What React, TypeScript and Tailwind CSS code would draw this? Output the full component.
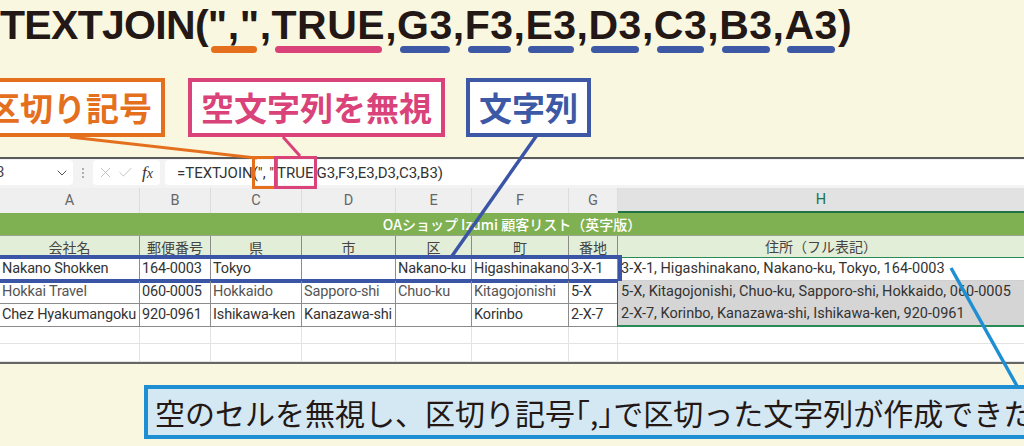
import { ChevronDown, X, Check } from "lucide-react";

const cols = "grid grid-cols-[140px_71px_91px_94px_76px_97px_49px_1fr]";

const letters = ["A", "B", "C", "D", "E", "F", "G", "H"];
const heads = ["会社名", "郵便番号", "県", "市", "区", "町", "番地", "住所（フル表記）"];

const rows = [
  {
    cells: ["Nakano Shokken", "164-0003", "Tokyo", "", "Nakano-ku", "Higashinakano", "3-X-1"],
    full: "3-X-1, Higashinakano, Nakano-ku, Tokyo, 164-0003",
    h: "h-[23px]",
  },
  {
    cells: ["Hokkai Travel", "060-0005", "Hokkaido", "Sapporo-shi", "Chuo-ku", "Kitagojonishi", "5-X"],
    full: "5-X, Kitagojonishi, Chuo-ku, Sapporo-shi, Hokkaido, 060-0005",
    h: "h-[22px]",
  },
  {
    cells: ["Chez Hyakumangoku", "920-0961", "Ishikawa-ken", "Kanazawa-shi", "", "Korinbo", "2-X-7"],
    full: "2-X-7, Korinbo, Kanazawa-shi, Ishikawa-ken, 920-0961",
    h: "h-[22px]",
  },
];

// formula tokens in the big heading, with the colour of the pill under them
const tokens: { t: string; pill?: string; track: string }[] = [
  { t: "TEXTJOIN(", track: "tracking-[-0.7px]" },
  { t: '","', pill: "bg-[#e4701e]", track: "tracking-[0.5px]" },
  { t: ",", track: "tracking-[0.5px]" },
  { t: "TRUE", pill: "bg-[#d9437a]", track: "tracking-[0.5px]" },
  { t: ",", track: "tracking-[0.5px]" },
  { t: "G3", pill: "bg-[#3d58a5]", track: "tracking-[0.5px]" },
  { t: ",", track: "tracking-[0.5px]" },
  { t: "F3", pill: "bg-[#3d58a5]", track: "tracking-[0.5px]" },
  { t: ",", track: "tracking-[0.5px]" },
  { t: "E3", pill: "bg-[#3d58a5]", track: "tracking-[0.5px]" },
  { t: ",", track: "tracking-[0.5px]" },
  { t: "D3", pill: "bg-[#3d58a5]", track: "tracking-[0.5px]" },
  { t: ",", track: "tracking-[0.5px]" },
  { t: "C3", pill: "bg-[#3d58a5]", track: "tracking-[0.5px]" },
  { t: ",", track: "tracking-[0.5px]" },
  { t: "B3", pill: "bg-[#3d58a5]", track: "tracking-[0.5px]" },
  { t: ",", track: "tracking-[0.5px]" },
  { t: "A3", pill: "bg-[#3d58a5]", track: "tracking-[0.5px]" },
  { t: ")", track: "tracking-[0.5px]" },
];

function Heading() {
  return (
    <div className="flex items-start pt-[5px] font-['Liberation_Sans',Arial,sans-serif] text-[41px] font-bold leading-[41px] text-[#231815]">
      {tokens.map((tk, i) => (
        <span key={i} className="flex flex-col">
          <span className={tk.track}>{tk.t}</span>
          {tk.pill && <span className={`mx-[3px] h-[7px] rounded-full ${tk.pill}`} />}
        </span>
      ))}
    </div>
  );
}

function Labels() {
  return (
    <div className="mt-[25px] flex h-[59px] font-bold">
      <div className="-ml-[26px] flex items-center border-[4px] border-[#e4701e] bg-white px-[9px] text-[33px] leading-none text-[#e4701e]">
        区切り記号
      </div>
      <div className="ml-[23px] flex items-center border-[4px] border-[#d9437a] bg-white px-[9px] text-[33px] leading-none text-[#d9437a]">
        空文字列を無視
      </div>
      <div className="ml-[21px] flex items-center border-[4px] border-[#3d58a5] bg-white px-[9px] text-[33px] leading-none text-[#3d58a5]">
        文字列
      </div>
    </div>
  );
}

function FormulaBar() {
  return (
    <div className="flex h-[31px] items-start border-t-2 border-[#5a5a5a] bg-[#f3f3f3] pt-[1px]">
      <div className="flex h-[25px] w-[73px] items-center justify-between rounded-r-[4px] bg-white pr-[3px]">
        <span className="-ml-[4px] text-[15px] text-[#444]">3</span>
        <ChevronDown size={16} strokeWidth={1.5} className="text-[#555]" />
      </div>
      <div className="flex h-[25px] w-[20px] flex-col items-center justify-center gap-[2px]">
        <span className="h-[2px] w-[2px] rounded-full bg-[#999]" />
        <span className="h-[2px] w-[2px] rounded-full bg-[#999]" />
        <span className="h-[2px] w-[2px] rounded-full bg-[#999]" />
      </div>
      <div className="flex h-[25px] w-[67px] items-center rounded-[4px] bg-white pl-[4px]">
        <X size={17} strokeWidth={1.2} className="text-[#b8b8b8]" />
        <Check size={17} strokeWidth={1.2} className="ml-[3px] text-[#b8b8b8]" />
        <span className="ml-[8px] font-['Liberation_Serif',serif] text-[17px] italic leading-none text-[#333]">
          f<span className="text-[14px]">x</span>
        </span>
      </div>
      <div className="ml-[5px] flex h-[25px] flex-1 items-center rounded-l-[4px] bg-white pl-[12px] text-[15px] text-[#333]">
        <span className="inline-block leading-[20px]">=TEXTJOIN(</span>
        <span className="relative inline-block leading-[20px]">
          {'", "'}
          <span className="absolute -top-[7px] -bottom-[6px] -left-[6px] -right-[4px] border-[3px] border-[#e4701e]" />
        </span>
        <span className="inline-block leading-[20px]">,</span>
        <span className="relative inline-block leading-[20px]">
          TRUE
          <span className="absolute -top-[7px] -bottom-[6px] -left-[3px] -right-[3px] border-[3px] border-[#d9437a]" />
        </span>
        <span className="inline-block leading-[20px]">,G3,F3,E3,D3,C3,B3)</span>
      </div>
    </div>
  );
}

function Sheet() {
  return (
    <div className="bg-white font-['Roboto','Noto_Sans_CJK_JP',sans-serif] text-[14.5px]">
      <FormulaBar />
      <div className={`${cols} h-[25px] bg-[#efefef] text-[#666]`}>
        {letters.map((l, i) => (
          <div
            key={l}
            className={
              i === 7
                ? "flex items-center justify-center border-b-2 border-[#217346] bg-[#e2e2e2] text-[#217346]"
                : "flex items-center justify-center border-r border-[#dcdcdc]"
            }
          >
            {l}
          </div>
        ))}
      </div>
      <div className="flex h-[23px] items-center justify-center border-b border-[#9aa590] bg-[#7fb152] font-['Noto_Sans_CJK_JP',sans-serif] text-[14px] font-medium text-white">
        OAショップ Izumi 顧客リスト（英字版）
      </div>
      <div className={`${cols} h-[22px] bg-[#e3eed9] font-['Noto_Sans_CJK_JP',sans-serif] text-[14px] text-[#444]`}>
        {heads.map((h, i) => (
          <div
            key={h}
            className={
              i === 7
                ? "flex items-center justify-center border-b-2 border-[#2a8a55]"
                : "flex items-center justify-center border-r border-b border-[#8a8a8a]"
            }
          >
            {h}
          </div>
        ))}
      </div>
      {rows.map((r, ri) => (
        <div key={ri} className={`relative ${cols} ${r.h}`}>
          {r.cells.map((c, ci) => (
            <div
              key={ci}
              className={`flex items-center overflow-hidden whitespace-nowrap border-b border-r pl-[2px] tracking-[-0.15px] ${
                ci === 6 && ri > 0 ? "border-b-[#8c8c8c] border-r-[#217346]" : "border-[#8c8c8c]"
              } ${ri === 1 && ci !== 1 && ci !== 6 ? "text-[#555]" : "text-[#333]"}`}
            >
              {c}
            </div>
          ))}
          <div
            className={`flex items-center whitespace-nowrap px-[3px] text-[#333] ${
              ri === 0
                ? "border-b border-[#d0d0d0] bg-white"
                : ri === 1
                  ? "border-b border-[#bdbdbd] bg-[#d5d5d5]"
                  : "border-b-2 border-[#2a8a55] bg-[#d5d5d5]"
            }`}
          >
            {r.full}
          </div>
          {ri === 0 && (
            <div className="absolute -top-[3px] -left-[4px] h-[28px] w-[626px] border-[4px] border-[#3a55a5]" />
          )}
        </div>
      ))}
      {["h-[19px]", "h-[18px]"].map((h, ri) => (
        <div key={ri} className={`${cols} ${h}`}>
          {letters.map((l, ci) => (
            <div key={l} className={`border-b border-[#e3e3e3] ${ci < 7 ? "border-r" : ""}`} />
          ))}
        </div>
      ))}
      <div className="h-[2px] bg-[#666]" />
    </div>
  );
}

function Callout() {
  return (
    <div className="mt-[21px] ml-[144px] flex h-[54px] w-[900px] items-center whitespace-nowrap border-[4px] border-[#1e8fd2] bg-[#d3e8f3] pl-[7px] text-[30px] leading-none text-[#231815]">
      空のセルを無視し、区切り記号<span className="-ml-[15px]">「</span>,<span className="-mr-[15px]">」</span>で区切った文字列が作成できた
    </div>
  );
}

export default function App() {
  return (
    <div className="relative h-[446px] w-[1024px] overflow-hidden bg-[#faf7e1] font-['Noto_Sans_CJK_JP',sans-serif]">
      <Heading />
      <Labels />
      <div className="mt-[20px]">
        <Sheet />
      </div>
      <Callout />
      <svg className="pointer-events-none absolute inset-0" width="1024" height="446">
        <line x1="70" y1="137" x2="257" y2="158" stroke="#e4701e" strokeWidth="3" />
        <line x1="283" y1="137" x2="300" y2="156" stroke="#d9437a" strokeWidth="3" />
        <line x1="537" y1="135" x2="452" y2="256" stroke="#3a55a5" strokeWidth="3.5" />
        <line x1="951" y1="268" x2="1017" y2="386" stroke="#1e8fd2" strokeWidth="3.5" />
      </svg>
    </div>
  );
}
